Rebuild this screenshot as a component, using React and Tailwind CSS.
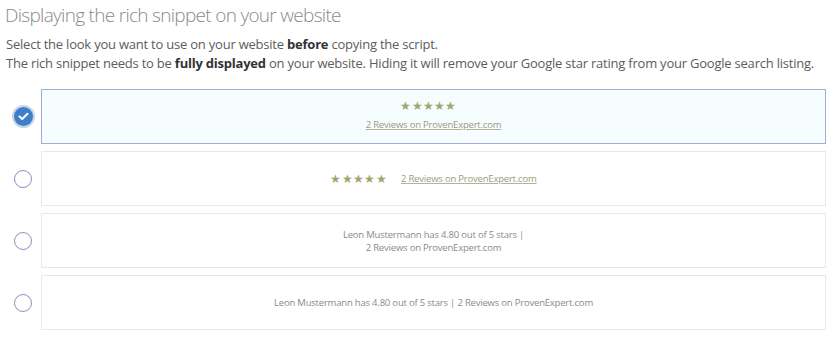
import React from "react";

const Stars = ({ className = "" }) => (
  <span className={"tracking-[0.3px] text-[#a3a36f] " + className}>★★★★★</span>
);

const Radio = ({ checked }) =>
  checked ? (
    <div className="w-[19px] h-[19px] rounded-full bg-[#3d7fc9] ring-2 ring-[#c9d6ea] flex items-center justify-center">
      <svg width="11" height="9" viewBox="0 0 11 9">
        <path d="M1.5 4.5 L4.2 7 L9.5 1.8" fill="none" stroke="white" strokeWidth="2" strokeLinecap="round" strokeLinejoin="round" />
      </svg>
    </div>
  ) : (
    <div className="w-[18px] h-[18px] rounded-full border border-[#8c8fc4] bg-white" />
  );

const Row = ({ checked, children }) => (
  <div className="flex items-center">
    <div className="w-[41px] flex justify-center pl-[5px] shrink-0">
      <Radio checked={checked} />
    </div>
    <div
      className={
        "flex-1 h-[55px] border flex flex-col items-center justify-center text-[9.5px] leading-[13px] tracking-[-0.2px] " +
        (checked ? "border-[#a3acd6] bg-[#f5fdfe]" : "border-[#e8e8e8] bg-white")
      }
    >
      {children}
    </div>
  </div>
);

const Link = () => (
  <span className="underline text-[#9e9a7f] decoration-[#b5b19a]">2 Reviews on ProvenExpert.com</span>
);

export default function App() {
  return (
    <div
      className="w-[837px] h-[344px] bg-white pl-[5px] pr-[11px] pt-[2px] text-[#666]"
      style={{ fontFamily: '"Open Sans", sans-serif' }}
    >
      <h1 className="text-[19px] font-light text-[#8a8a8a] leading-[26px] tracking-[-0.7px]">
        Displaying the rich snippet on your website
      </h1>
      <div className="mt-[7px] text-[13px] leading-[19px] text-[#5c5c5c] tracking-[-0.22px] pl-[1px]">
        <p>
          Select the look you want to use on your website <b className="font-bold text-[#333]">before</b> copying the script.
        </p>
        <p>
          The rich snippet needs to be <b className="font-bold text-[#333]">fully displayed</b> on your website. Hiding it will remove your Google star rating from your Google search listing.
        </p>
      </div>
      <div className="mt-[16px] flex flex-col gap-[7px] -ml-[5px]">
        <Row checked>
          <Stars className="text-[12px] leading-[14px] -ml-[10px] -mt-[3px]" />
          <div className="mt-[5px]">
            <Link />
          </div>
        </Row>
        <Row>
          <div className="flex items-center gap-[14px]">
            <Stars className="text-[12px]" />
            <Link />
          </div>
        </Row>
        <Row>
          <span className="text-[#8b8b8b]">Leon Mustermann has 4.80 out of 5 stars |</span>
          <span className="text-[#8b8b8b]">2 Reviews on ProvenExpert.com</span>
        </Row>
        <Row>
          <span className="text-[#8b8b8b]">
            Leon Mustermann has 4.80 out of 5 stars | 2 Reviews on ProvenExpert.com
          </span>
        </Row>
      </div>
    </div>
  );
}
